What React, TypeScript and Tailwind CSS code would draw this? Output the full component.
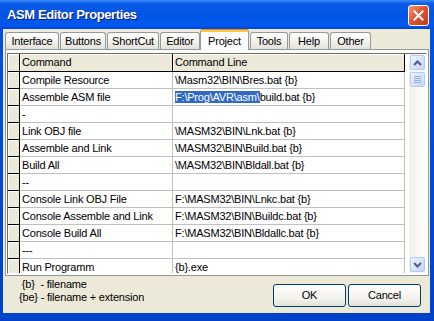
import React from 'react';

const tabs = [
  { label: 'Interface', cls: 'w-[54px]' },
  { label: 'Buttons', cls: 'w-[46px]' },
  { label: 'ShortCut', cls: 'w-[52px]' },
  { label: 'Editor', cls: 'w-[40px]' },
  { label: 'Project', cls: 'w-[49px]', active: true },
  { label: 'Tools', cls: 'w-[38px]' },
  { label: 'Help', cls: 'w-[40px]' },
  { label: 'Other', cls: 'w-[41px]' },
];

const rows: [string, string][] = [
  ['Compile Resource', '\\Masm32\\BIN\\Bres.bat {b}'],
  ['Assemble ASM file', 'build.bat {b}'],
  ['-', ''],
  ['Link OBJ file', '\\MASM32\\BIN\\Lnk.bat {b}'],
  ['Assemble and Link', '\\MASM32\\BIN\\Build.bat {b}'],
  ['Build All', '\\MASM32\\BIN\\Bldall.bat {b}'],
  ['--', ''],
  ['Console Link OBJ File', 'F:\\MASM32\\BIN\\Lnkc.bat {b}'],
  ['Console Assemble and Link', 'F:\\MASM32\\BIN\\Buildc.bat {b}'],
  ['Console Build All', 'F:\\MASM32\\BIN\\Bldallc.bat {b}'],
  ['---', ''],
  ['Run Programm', '{b}.exe'],
];

const fixedCell = 'bg-[#ECE9D8] border-r border-b border-[#000] shadow-[inset_1px_1px_0_#fff]';
const dataCell = 'bg-white border-r border-b border-[#C0C0C0] pl-[2px] pt-[1px] whitespace-pre overflow-hidden';

const ScrollButton = ({ down }: { down?: boolean }) => (
  <div className="h-[17px] w-[17px] p-[1px]">
    <div className="flex h-full w-full items-center justify-center rounded-[2px] border border-[#B4C8F6] bg-[linear-gradient(135deg,#EEF3FF,#C3D4FB)]">
      <svg width="9" height="6" viewBox="0 0 9 6" className={down ? 'rotate-180' : ''}>
        <polyline points="1,5 4.5,1.5 8,5" fill="none" stroke="#4D6185" strokeWidth="2" />
      </svg>
    </div>
  </div>
);

const App: React.FC = () => {
  return (
    <div className="flex h-[321px] w-[434px] flex-col overflow-hidden bg-[linear-gradient(to_bottom,#0054E3,#0042C8)] font-['Liberation_Sans',Arial,sans-serif] text-[11px] tracking-[-0.2px] text-black">
      {/* title bar */}
      <div className="flex h-[29px] items-center justify-between bg-[linear-gradient(to_bottom,#3D8DF7_0%,#0B5DE8_12%,#0054E3_50%,#0058EE_88%,#0046D4_100%)] pl-[7px] pr-[5px] pt-[1px]">
        <span className="text-[13px] font-bold tracking-[-0.4px] text-white [text-shadow:1px_1px_#0A1883]">
          ASM Editor Properties
        </span>
        <div className="flex h-[21px] w-[21px] items-center justify-center rounded-[3px] border border-white bg-[linear-gradient(135deg,#F09A7C,#E0542F_45%,#C33A1C)]">
          <svg width="11" height="11" viewBox="0 0 11 11">
            <path d="M1.5 1.5 L9.5 9.5 M9.5 1.5 L1.5 9.5" stroke="#fff" strokeWidth="2" strokeLinecap="square" />
          </svg>
        </div>
      </div>

      {/* dialog body */}
      <div className="mb-[8px] ml-[3px] mr-[4px] flex flex-1 flex-col bg-[#ECE9D8]">
        {/* tabs */}
        <div className="relative z-10 flex h-[20px] items-end gap-[1px] pl-[2px]">
          {tabs.map((t) =>
            t.active ? (
              <div
                key={t.label}
                className={`${t.cls} -ml-[1px] -mb-[1px] flex h-[21px] flex-col rounded-t-[3px] border-x border-[#919B9C] bg-[#FCFCFE]`}
              >
                <div className="h-[1px] rounded-t-[3px] bg-[#E68B2C]" />
                <div className="h-[2px] bg-[#FFC73C]" />
                <div className="flex flex-1 items-start justify-center pt-[1px]">{t.label}</div>
              </div>
            ) : (
              <div
                key={t.label}
                className={`${t.cls} flex h-[17px] items-center justify-center rounded-t-[3px] border border-b-0 border-[#919B9C] bg-[linear-gradient(to_bottom,#FFFFFF,#F0EFEA_60%,#E4E2D9)] pt-[1px]`}
              >
                {t.label}
              </div>
            )
          )}
        </div>

        {/* tab page */}
        <div className="ml-[2px] mr-[1px] border border-[#919B9C] bg-[#FCFCFE] px-[1px] pb-[1px] pt-[3px]">
          <div className="flex h-[221px] border border-b-white border-l-[#716F64] border-r-white border-t-[#716F64]">
            <div className="flex-1 overflow-hidden bg-white">
              <div className="flex h-[18px] leading-[17px]">
                <div className={`${fixedCell} w-[12px]`} />
                <div className={`${fixedCell} w-[153px] pl-[2px]`}>Command</div>
                <div className={`${fixedCell} w-[232px] pl-[2px]`}>Command Line</div>
              </div>
              {rows.map(([cmd, line], i) => (
                <div key={i} className="flex h-[17px] leading-[15px]">
                  <div className={`${fixedCell} w-[12px]`} />
                  <div className={`${dataCell} w-[153px]`}>{cmd}</div>
                  <div className={`${dataCell} w-[232px]`}>
                    {i === 1 && <span className="bg-[#316AC5] text-white">F:\Prog\AVR\asm\</span>}
                    {line}
                  </div>
                </div>
              ))}
            </div>

            {/* scrollbar */}
            <div className="flex w-[17px] flex-col bg-[linear-gradient(to_right,#F3F1EC,#FEFEFB)]">
              <ScrollButton />
              <div className="h-[17px] w-[17px] p-[1px]">
                <div className="flex h-full w-full flex-col items-center justify-center gap-[1px] rounded-[2px] border border-[#B4C8F6] bg-[linear-gradient(135deg,#EEF3FF,#C3D4FB)]">
                  <div className="h-[1px] w-[7px] bg-[#8CB0F8]" />
                  <div className="h-[1px] w-[7px] bg-[#8CB0F8]" />
                  <div className="h-[1px] w-[7px] bg-[#8CB0F8]" />
                  <div className="h-[1px] w-[7px] bg-[#8CB0F8]" />
                </div>
              </div>
              <div className="flex-1" />
              <ScrollButton down />
            </div>
          </div>
        </div>

        {/* footer */}
        <div className="flex flex-1 justify-between pr-[9px]">
          <div className="whitespace-pre pl-[16px] pt-[2px] leading-[13px]">
            {' {b}  - filename\n{be} - filename + extension'}
          </div>
          <div className="flex gap-[2px] pt-[8px]">
            <button className="h-[23px] w-[73px] rounded-[3px] border border-[#003C74] bg-[linear-gradient(to_bottom,#FFFFFF,#F1F0EA_70%,#E3E2DA)]">
              OK
            </button>
            <button className="h-[23px] w-[73px] rounded-[3px] border border-[#003C74] bg-[linear-gradient(to_bottom,#FFFFFF,#F1F0EA_70%,#E3E2DA)]">
              Cancel
            </button>
          </div>
        </div>
      </div>
    </div>
  );
};

export default App;
